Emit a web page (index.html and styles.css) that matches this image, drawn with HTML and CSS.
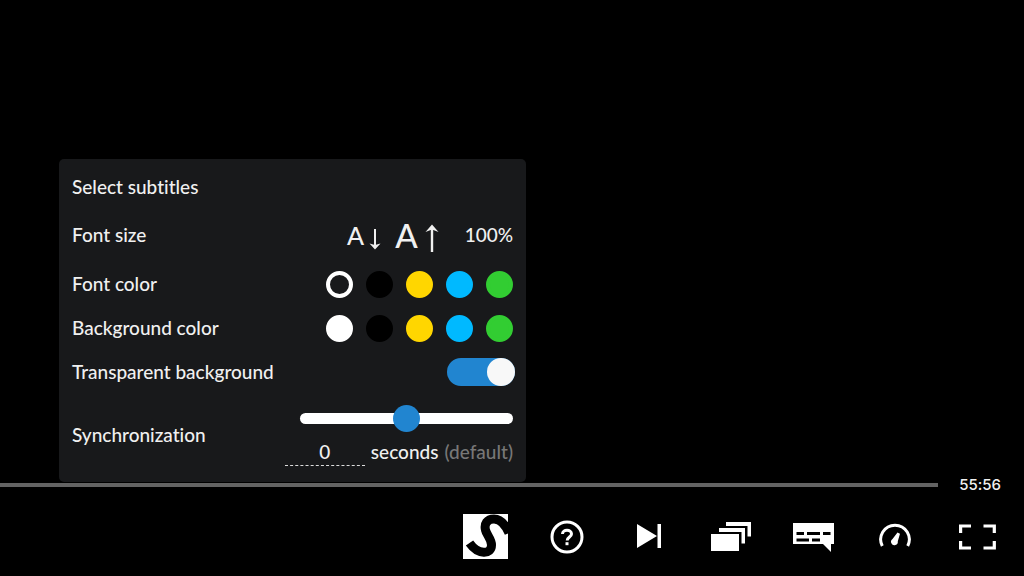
FILE: index.html
```html
<!DOCTYPE html>
<html lang="en">
<head>
<meta charset="utf-8">
<meta name="viewport" content="width=device-width, initial-scale=1">
<title>Video player</title>
<link rel="stylesheet" href="styles.css">
</head>
<body>
<main class="player">
  <form class="panel">
    <div class="row"><span>Select subtitles</span></div>
    <div class="row">
      <span>Font size</span>
      <div class="sizes">
        <button type="button" class="size size-small" aria-label="Decrease font size">A<svg width="12" height="22" viewBox="0 0 12 22" aria-hidden="true"><path d="M6 1v17" stroke="currentColor" stroke-width="2"/><path d="M.5 15.500 6 17l5.500-1.500L6 21.500z" fill="currentColor"/></svg></button>
        <button type="button" class="size size-large" aria-label="Increase font size">A<svg width="14" height="28" viewBox="0 0 14 28" aria-hidden="true"><path d="M7 3v25" stroke="currentColor" stroke-width="2.400"/><path d="M.5 8 7 .5 13.500 8 7 5.500z" fill="currentColor"/></svg></button>
        <output class="percent">100%</output>
      </div>
    </div>
    <div class="row row-colors">
      <span>Font color</span>
      <div class="swatches" role="radiogroup" aria-label="Font color">
        <input type="radio" name="font" class="swatch white" aria-label="White" checked>
        <input type="radio" name="font" class="swatch black" aria-label="Black">
        <input type="radio" name="font" class="swatch yellow" aria-label="Yellow">
        <input type="radio" name="font" class="swatch blue" aria-label="Blue">
        <input type="radio" name="font" class="swatch green" aria-label="Green">
      </div>
    </div>
    <div class="row row-short">
      <span>Background color</span>
      <div class="swatches" role="radiogroup" aria-label="Background color">
        <input type="radio" name="background" class="swatch white" aria-label="White">
        <input type="radio" name="background" class="swatch black" aria-label="Black">
        <input type="radio" name="background" class="swatch yellow" aria-label="Yellow">
        <input type="radio" name="background" class="swatch blue" aria-label="Blue">
        <input type="radio" name="background" class="swatch green" aria-label="Green">
      </div>
    </div>
    <div class="row row-short">
      <label for="transparent">Transparent background</label>
      <input type="checkbox" id="transparent" class="toggle" checked>
    </div>
    <div class="row row-sync">
      <label for="offset">Synchronization</label>
      <div class="sync">
        <input type="range" class="slider" min="-10" max="10" value="0" aria-label="Subtitle offset">
        <div class="offset">
          <input type="text" id="offset" class="number" value="0">
          <span>seconds</span>
          <span class="muted">(default)</span>
        </div>
      </div>
    </div>
  </form>

  <div class="timeline">
    <input type="range" class="seek" min="0" max="3356" value="0" aria-label="Seek">
    <time class="time">55:56</time>
  </div>

  <div class="controls">
    <button type="button" class="control" aria-label="Subtitle service">
      <svg width="45" height="45" viewBox="0 0 45 45"><path fill="#fff" d="M0 0h45v45H0z"/><path d="M46 19C42 10 37 5 31 5C24 5 21 10 22.500 16C23.500 21 28.500 25 28.500 31C28.500 41 15 41 6.500 29" fill="none" stroke="#000" stroke-width="9"/></svg>
    </button>
    <button type="button" class="control" aria-label="Help">
      <svg width="34" height="34" viewBox="0 0 34 34" fill="none" stroke="#fff" stroke-width="3"><circle cx="17" cy="17" r="15"/><path d="M12.500 14c0-5 9-5 9 0 0 3-4.300 3-4.300 6.500"/><path d="M17 22.200v3"/></svg>
    </button>
    <button type="button" class="control" aria-label="Next">
      <svg width="26" height="26" viewBox="0 0 26 26" fill="#fff"><path d="M1 0l20 12L1 24zM21.500 0h3.500v24h-3.500z"/></svg>
    </button>
    <button type="button" class="control" aria-label="Episodes">
      <svg width="41" height="32" viewBox="0 0 41 32" fill="#fff"><path d="M0 13h28v17H0zM8 7h26v15.500h-3.500V11H8zM15 1h25v14.500h-3.500V5H15z"/></svg>
    </button>
    <button type="button" class="control" aria-label="Subtitles">
      <svg width="41" height="30" viewBox="0 0 41 30"><path fill="#fff" d="M0 1h41v21h-3v8l-8-8H0z"/><path d="M3.500 11.500H11M14 11.500h13M30 11.500h7.500M3.500 18H16M19 18h8" stroke="#000" stroke-width="3"/></svg>
    </button>
    <button type="button" class="control" aria-label="Playback speed">
      <svg width="34" height="28" viewBox="0 0 34 28"><path d="M4.300 23A14.300 14.300 0 1 1 29.700 23" fill="none" stroke="#fff" stroke-width="3"/><path d="M19.500 9.500l2.500 1.300-2.200 7.500a3.400 3.400 0 1 1-5.300-2.300z" fill="#fff"/></svg>
    </button>
    <button type="button" class="control" aria-label="Full screen">
      <svg width="38" height="26" viewBox="0 0 38 26" fill="none" stroke="#fff" stroke-width="3.200"><path d="M13 2H2.600v7M25.500 2h10.800v7M13 24H2.600v-7M25.500 24h10.800v-7"/></svg>
    </button>
  </div>
</main>
</body>
</html>
```
FILE: styles.css
```css
* {
  box-sizing: border-box;
}

body {
  margin: 0;
  background: #000;
  color: #f0f0f0;
  font-family: Lato, "Liberation Sans", sans-serif;
  font-size: 19px;
  font-weight: 500;
  font-variant-ligatures: none;
  line-height: 24px;
}

button,
input {
  margin: 0;
  padding: 0;
  border: 0;
  background: none;
  color: inherit;
  font: inherit;
}

.player {
  min-height: 100vh;
  display: flex;
  flex-direction: column;
  justify-content: flex-end;
}

.panel {
  width: 467px;
  max-width: 100%;
  margin-left: 59px;
  padding: 4px 13px 6px;
  border-radius: 5px;
  background: #18191b;
}

.row {
  min-height: 48px;
  display: flex;
  align-items: center;
  justify-content: space-between;
}

.row-colors,
.row-short {
  min-height: 44px;
}

.row-colors {
  margin-top: 3px;
}

.row-sync {
  min-height: 82px;
}

.sizes,
.size,
.swatches,
.offset {
  display: flex;
  align-items: center;
}

.size {
  height: 36px;
}

.size-small {
  gap: 5px;
  margin-right: 14px;
  font-size: 25px;
}

.size-small svg {
  margin-top: 8px;
}

.size-large {
  gap: 7px;
  margin-right: 26px;
  font-size: 33px;
}

.size-large svg {
  margin-top: 6px;
}

.swatches {
  gap: 13px;
}

.swatch {
  appearance: none;
  width: 27px;
  height: 27px;
  border: 4px solid currentColor;
  border-radius: 50%;
  background: currentColor;
}

.swatch:checked {
  background: none;
}

.white { color: #fff; }
.black { color: #000; }
.yellow { color: #ffd600; }
.blue { color: #00b9ff; }
.green { color: #32cd32; }

.toggle {
  appearance: none;
  display: flex;
  width: 68px;
  height: 28px;
  margin-right: -2px;
  border-radius: 14px;
  background: #555;
}

.toggle::before {
  content: "";
  width: 28px;
  height: 28px;
  border-radius: 50%;
  background: #f8f8f8;
}

.toggle:checked {
  justify-content: flex-end;
  background: #2185d0;
}

.sync {
  display: flex;
  flex-direction: column;
  align-items: flex-end;
  gap: 6px;
}

.slider {
  appearance: none;
  width: 213px;
  height: 28px;
}

.slider::-webkit-slider-runnable-track {
  height: 11px;
  border-radius: 6px;
  background: #fff;
}

.slider::-webkit-slider-thumb {
  appearance: none;
  width: 27px;
  height: 27px;
  margin-top: -8px;
  border-radius: 50%;
  background: #2185d0;
}

.number {
  width: 80px;
  height: 28px;
  margin-right: 6px;
  border-bottom: 1px dashed #ddd;
  text-align: center;
}

.muted {
  margin-left: 6px;
  color: #777;
}

.timeline {
  height: 6px;
  display: flex;
  align-items: center;
  gap: 21px;
  padding-right: 23px;
}

.seek {
  appearance: none;
  flex: 1;
  min-width: 0;
  height: 4px;
  background: #636363;
}

.seek::-webkit-slider-thumb {
  appearance: none;
  width: 0;
  height: 4px;
}

.time {
  font-family: Inter, "Liberation Sans", sans-serif;
  font-size: 15px;
}

.controls {
  display: flex;
  justify-content: flex-end;
  padding: 26px 6px 17px;
}

.control {
  width: 82px;
  height: 45px;
  display: flex;
  align-items: center;
  justify-content: center;
}
```
